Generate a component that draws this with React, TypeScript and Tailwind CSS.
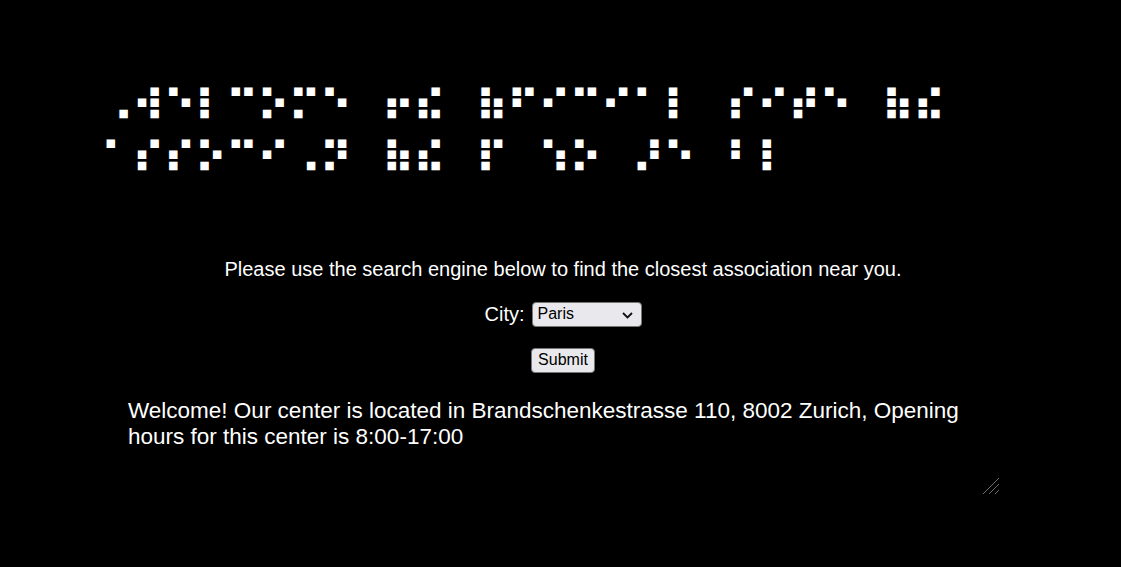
const lines = [
  "⠠⠺⠑⠇⠉⠕⠍⠑ ⠖⠮ ⠷⠋⠊⠉⠊⠁⠇ ⠎⠊⠞⠑ ⠷⠮",
  "⠁⠎⠎⠕⠉⠊⠠⠝ ⠷⠮ ⠏ ⠱⠕ ⠜⠑ ⠃⠇",
];

export default function App() {
  return (
    <div className="min-h-screen bg-black text-white font-['Liberation_Sans',Arial,sans-serif]">
      <h1 className="pl-[100.5px] pt-[79.5px] font-['DejaVu_Sans',sans-serif] text-[43px] font-bold leading-[52.7px]">
        {lines.map((line, i) => (
          <div key={i} className="flex h-[52.7px] items-center">
            {Array.from(line).map((ch, j) => (
              <span key={j} className="inline-block w-[31.24px] text-center">
                {ch === " " ? "\u00a0" : ch}
              </span>
            ))}
          </div>
        ))}
      </h1>
      <div className="pl-[5px]">
        <p className="mt-[73px] text-center text-[20px] leading-[23px]">
          Please use the search engine below to find the closest association near you.
        </p>
        <form className="flex flex-col items-center">
          <div className="mt-[21px] flex items-center gap-[7px] text-[20px] leading-[23px]">
            <span>City:</span>
            <div className="relative">
              <select
                defaultValue="Paris"
                className="block h-[25px] w-[110px] appearance-none rounded-[4px] border border-[#767676] bg-[#e9e9ed] pl-[5px] text-[16px] leading-[18px] text-black"
              >
                <option>Paris</option>
                <option>Zurich</option>
              </select>
              <svg
                className="pointer-events-none absolute right-[9px] top-[10px]"
                width="11"
                height="7"
                viewBox="0 0 11 7"
              >
                <path d="M1 1 L5.5 5.5 L10 1" fill="none" stroke="#111" strokeWidth="1.8" />
              </svg>
            </div>
          </div>
          <button
            type="button"
            className="mt-[21px] h-[25px] rounded-[4px] border border-[#767676] bg-[#e9e9ed] px-[6.5px] text-[16px] leading-[18px] text-black"
          >
            Submit
          </button>
        </form>
      </div>
      <div className="relative mt-[22px] ml-[125px] h-[102px] w-[876px]">
        <textarea
          readOnly
          defaultValue="Welcome! Our center is located in Brandschenkestrasse 110, 8002 Zurich, Opening hours for this center is 8:00-17:00"
          className="block h-full w-full resize-none border-0 bg-black p-[3px] text-[22.5px] leading-[25.8px] text-white outline-none"
        />
        <svg
          className="pointer-events-none absolute bottom-[2px] right-[1px]"
          width="18"
          height="18"
          viewBox="0 0 18 18"
        >
          <path d="M17 1 L1 17 M17 7 L7 17 M17 13 L13 17" stroke="#6b6b6b" strokeWidth="1" />
        </svg>
      </div>
    </div>
  );
}
